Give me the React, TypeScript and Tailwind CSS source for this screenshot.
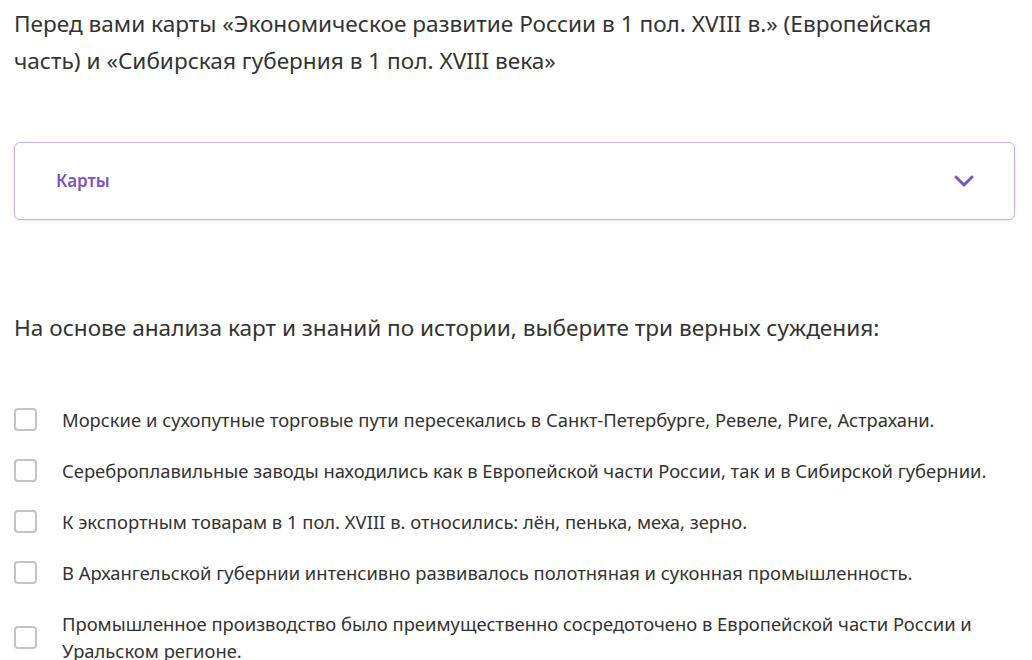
import { ChevronDown } from "lucide-react"

const options = [
  "Морские и сухопутные торговые пути пересекались в Санкт-Петербурге, Ревеле, Риге, Астрахани.",
  "Сереброплавильные заводы находились как в Европейской части России, так и в Сибирской губернии.",
  "К экспортным товарам в 1 пол. XVIII в. относились: лён, пенька, меха, зерно.",
  "В Архангельской губернии интенсивно развивалось полотняная и суконная промышленность.",
  "Промышленное производство было преимущественно сосредоточено в Европейской части России и Уральском регионе.",
]

export default function App() {
  return (
    <div className="min-h-[660px] bg-white px-[14px] pt-[5px] text-[#333333] font-['Noto_Sans','Lato',sans-serif]">
      <p className="max-w-[940px] text-[22.6px] leading-[37px]">
        Перед вами карты «Экономическое развитие России в 1 пол. XVIII в.» (Европейская часть) и «Сибирская
        губерния в 1 пол. XVIII века»
      </p>

      <div className="mt-[63px] mr-[3px] flex h-[78px] items-center justify-between rounded-md border border-[#c6b1ec] pl-[41px] pr-[34px] shadow-[0_1px_3px_rgba(120,80,200,0.15)]">
        <span className="text-[17px] font-semibold text-[#7b52c9]">Карты</span>
        <ChevronDown className="h-8 w-8 text-[#7b52c9]" strokeWidth={2.2} />
      </div>

      <p className="mt-[89px] text-[22.6px] leading-[37px]">
        На основе анализа карт и знаний по истории, выберите три верных суждения:
      </p>

      <ul className="mt-[60px] flex flex-col gap-[24px]">
        {options.map((text) => (
          <li key={text} className="flex items-center gap-[25px]">
            <span className="h-[23px] w-[23px] shrink-0 rounded-[4px] border-2 border-[#c4c4c4] bg-white" />
            <span className="text-[18.4px] leading-[27px]">{text}</span>
          </li>
        ))}
      </ul>
    </div>
  )
}
